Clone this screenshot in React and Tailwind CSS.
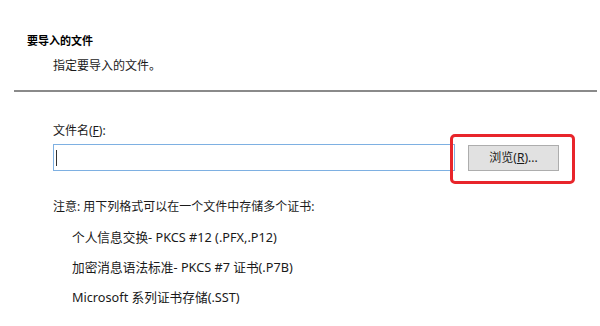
import React from 'react';

const FONT = '"Noto Sans", "Noto Sans CJK SC", sans-serif';

export default function App() {
    const items = [
        '个人信息交换- PKCS #12 (.PFX,.P12)',
        '加密消息语法标准- PKCS #7 证书(.P7B)',
        'Microsoft 系列证书存储(.SST)',
    ];

    return (
        <div
            className="w-[600px] h-[326px] bg-white text-[#1a1a1a] overflow-hidden flex flex-col"
            style={{ fontFamily: FONT }}
        >
            {/* Header */}
            <div className="pt-[34px] pl-[27px] text-[11px] leading-[14px] font-bold text-black">要导入的文件</div>
            <div className="mt-[10px] pl-[53px] text-[12px] leading-[16px]">指定要导入的文件。</div>
            <div className="mt-[16px] ml-[14px] mr-[3px] h-[2px] bg-[#8a8a8a]"></div>

            {/* File picker */}
            <div className="pl-[53px] pt-[31px] flex flex-col">
                <div className="text-[12px] leading-[16px]">
                    文件名(<span className="underline">F</span>):
                </div>
                <div className="mt-[5px] flex items-start gap-[13px]">
                    <div className="w-[402px] h-[27px] border border-[#7eb0e2] bg-white flex items-center pl-[2px]">
                        <div className="w-[1px] h-[16px] bg-[#333]"></div>
                    </div>
                    <div className="relative mt-[1px]">
                        <button className="w-[91px] h-[26px] bg-[#e1e1e1] border border-[#adadad] text-[12px] leading-[16px] text-[#1a1a1a] flex items-center justify-center">
                            浏览(<span className="underline">R</span>)...
                        </button>
                        {/* annotation */}
                        <div className="absolute left-[-18px] top-[-11px] w-[125px] h-[50px] border-[3px] border-[#e8252b] rounded-[5px] pointer-events-none"></div>
                    </div>
                </div>

                <div className="mt-[28px] text-[12px] leading-[16px]">注意: 用下列格式可以在一个文件中存储多个证书:</div>
                <div className="pl-[19px] flex flex-col gap-[14px] mt-[14px]">
                    {items.map((t) => (
                        <div key={t} className="text-[12.7px] leading-[16px]">{t}</div>
                    ))}
                </div>
            </div>
        </div>
    );
}
